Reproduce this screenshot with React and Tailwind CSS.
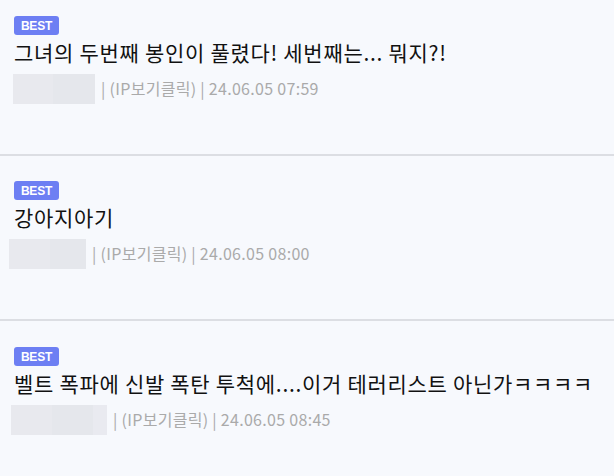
import React from 'react';

const posts = [
  { title: '그녀의 두번째 봉인이 풀렸다! 세번째는... 뭐지?!', date: '24.06.05 07:59', boxX: 'ml-[13px]', segs: ['w-[40px]', 'w-[42px]'], pt: 'pt-[16px]', h: 'h-[156px]' },
  { title: '강아지아기', date: '24.06.05 08:00', boxX: 'ml-[9px]', segs: ['w-[41px]', 'w-[36px]'], pt: 'pt-[25px]', h: 'h-[165px]' },
  { title: '벨트 폭파에 신발 폭탄 투척에....이거 테러리스트 아닌가ㅋㅋㅋㅋ', date: '24.06.05 08:45', boxX: 'ml-[11px]', segs: ['w-[41px]', 'w-[41px]', 'w-[14px]'], pt: 'pt-[26px]', h: 'h-[155px]' },
];

const segColors = ['bg-[#e8e9ee]', 'bg-[#e5e7ec]', 'bg-[#e9eaf0]'];

const PostItem = ({ post, last }) => (
  <div className={`${post.h} ${post.pt} ${last ? '' : 'border-b-2 border-[#dcdee3]'}`}>
    <div className="flex pl-[14px]">
      <span className="flex h-[19px] w-[45px] items-center justify-center rounded-[3px] bg-[#6d7ff3] text-[12px] font-bold text-white font-['Liberation_Sans',sans-serif] tracking-[-0.2px]">
        BEST
      </span>
    </div>
    <div className="pl-[14px] mt-[3px] whitespace-nowrap text-[21px] leading-[28px] tracking-[0.7px] text-[#111] font-['Noto_Sans_CJK_KR',sans-serif]">
      {post.title}
    </div>
    <div className={`flex items-center mt-[8px] ${post.boxX}`}>
      <div className="flex h-[30px]">
        {post.segs.map((w, i) => (
          <div key={i} className={`${w} h-full ${segColors[i]}`} />
        ))}
      </div>
      <span className="ml-[6px] mt-[-3px] text-[16px] tracking-[0.3px] text-[#aaaaaa] font-['Noto_Sans_CJK_KR',sans-serif]">
        | (IP보기클릭) | {post.date}
      </span>
    </div>
  </div>
);

export default function App() {
  return (
    <div className="w-[614px] h-[476px] overflow-hidden bg-[#f7f9fd]">
      {posts.map((p, i) => (
        <PostItem key={i} post={p} last={i === posts.length - 1} />
      ))}
    </div>
  );
}
